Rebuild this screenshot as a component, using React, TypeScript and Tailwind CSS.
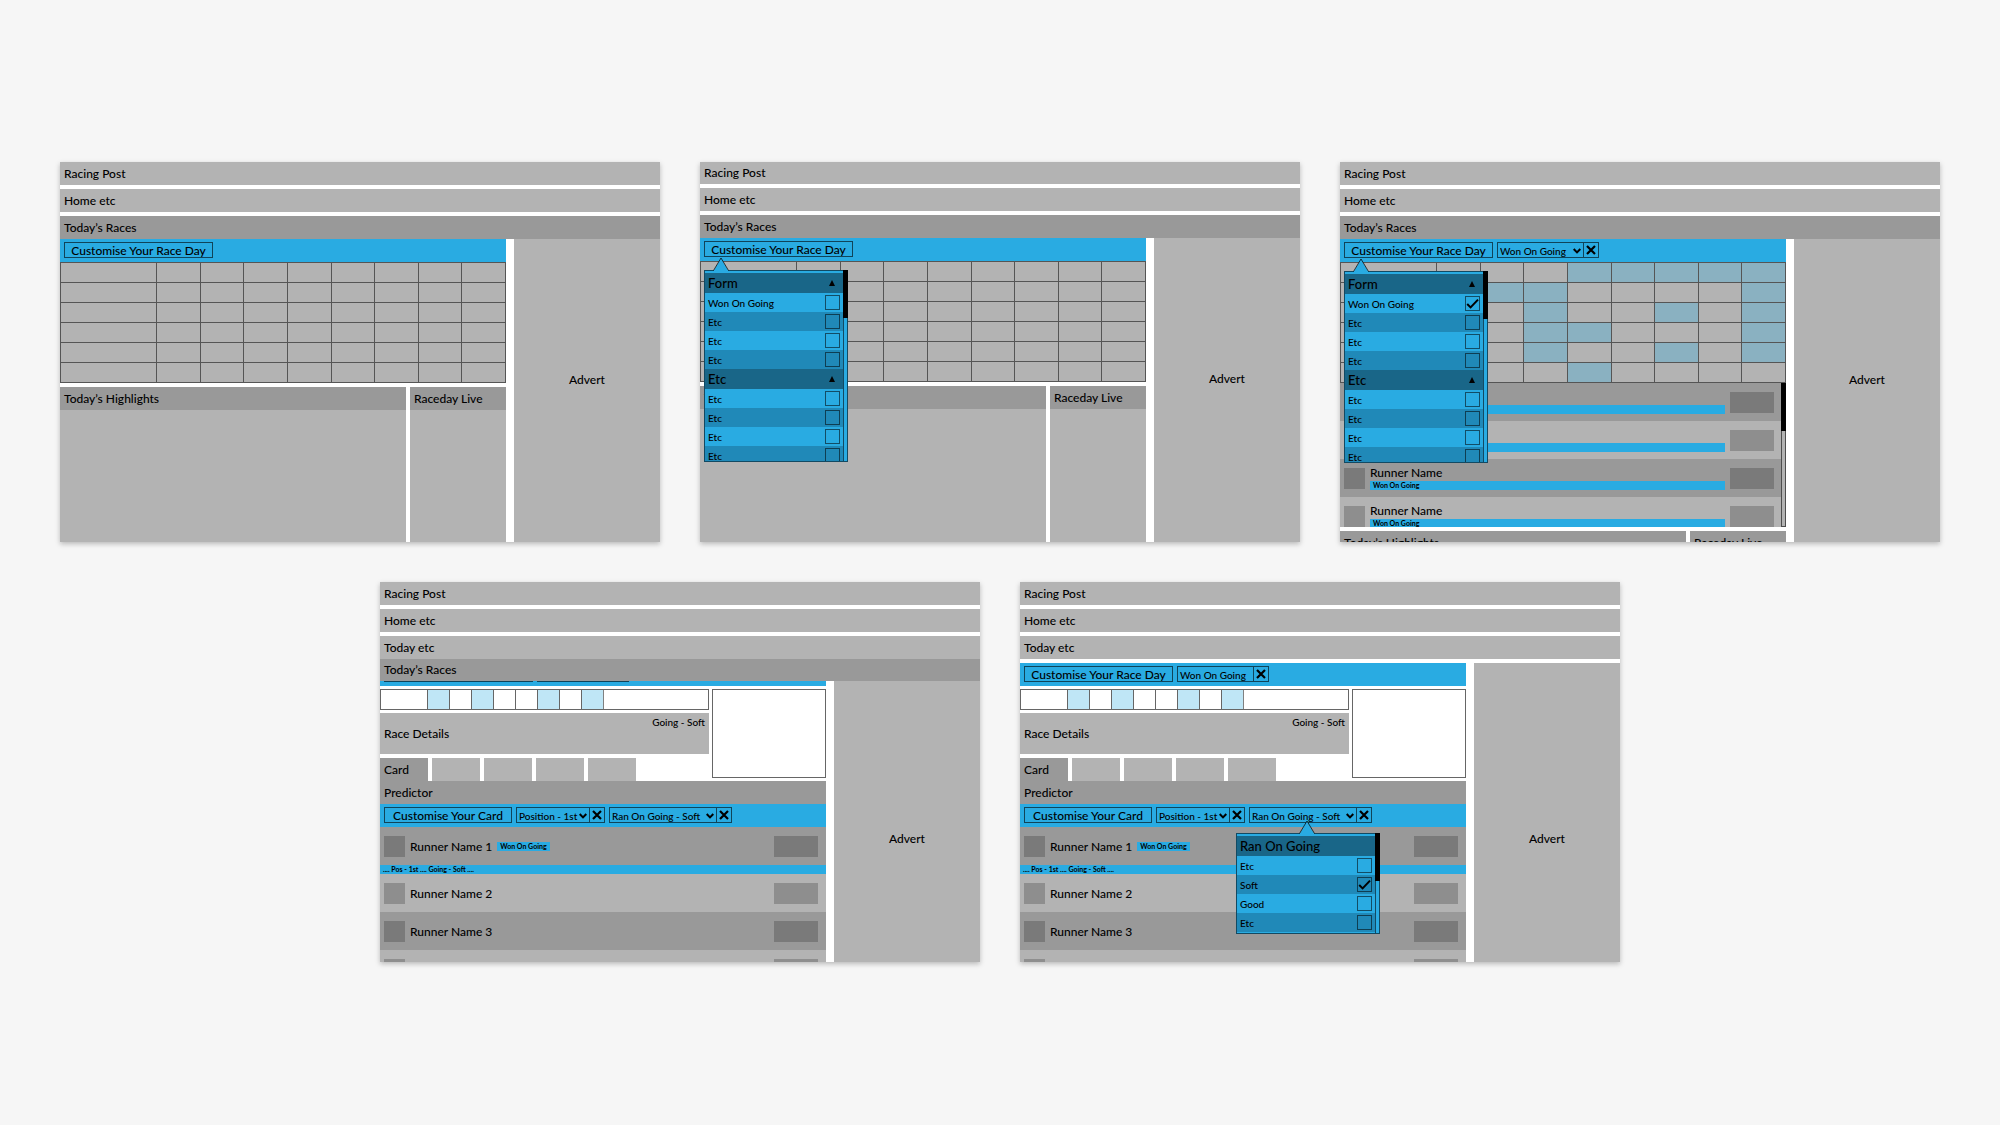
import type { ReactNode } from "react";

type Tone = "light" | "dark";

const MEETING_ROWS = [0, 1, 2, 3, 4, 5];
const RACE_COLS = [0, 1, 2, 3, 4, 5, 6, 7, 8];

// columns to highlight in each meeting row
const WON_ON_GOING: number[][] = [[4, 5, 6, 7, 8], [2, 3, 8], [3, 6, 8], [3, 4, 8], [3, 6, 8], [4]];

function Bar({ children, tone = "light", className = "h-[23px]" }: { children: ReactNode; tone?: Tone; className?: string }) {
  return (
    <div className={`flex shrink-0 items-center px-1 text-xs leading-4 ${tone === "dark" ? "bg-[#999999]" : "bg-[#b3b3b3]"} ${className}`}>
      {children}
    </div>
  );
}

function Frame({ children }: { children: ReactNode }) {
  return (
    <section className="flex h-[380px] w-[30%] flex-col overflow-hidden bg-white shadow-[0_2px_5px_rgba(0,0,0,0.25)]">
      {children}
    </section>
  );
}

function Advert({ className }: { className: string }) {
  return <aside className={`w-[146px] shrink-0 bg-[#b3b3b3] text-center text-xs leading-4 ${className}`}>Advert</aside>;
}

function Toolbar({ children }: { children: ReactNode }) {
  return <div className="relative flex h-[23px] shrink-0 items-start gap-1 bg-[#29abe2] px-1 pt-[3px]">{children}</div>;
}

function ToolButton({ children, className }: { children: ReactNode; className: string }) {
  return (
    <button className={`h-4 border border-black/60 text-center text-xs leading-4 whitespace-nowrap ${className}`}>
      {children}
    </button>
  );
}

function RemoveButton({ label }: { label: string }) {
  return (
    <button aria-label={`Remove ${label}`} className="flex w-[15px] items-center justify-center border-l border-black/60">
      <svg viewBox="0 0 10 10" className="size-[10px]" fill="none" stroke="#000" strokeWidth="2.2">
        <path d="M1 1 9 9M9 1 1 9" />
      </svg>
    </button>
  );
}

function FilterSelect({ value, className }: { value: string; className: string }) {
  return (
    <div className={`flex h-4 border border-black/60 ${className}`}>
      <div className="relative flex-1">
        <select aria-label={value} className="block h-4 w-full appearance-none bg-transparent pl-[2px] text-[10px] leading-4">
          <option>{value}</option>
        </select>
        <svg viewBox="0 0 8 6" className="pointer-events-none absolute top-[5px] right-[2px] h-[6px] w-2" fill="none" stroke="#000" strokeWidth="2">
          <path d="M.7 1 4 4.4 7.3 1" />
        </svg>
      </div>
      <RemoveButton label={value} />
    </div>
  );
}

function FilterTag({ value, className }: { value: string; className: string }) {
  return (
    <div className={`flex h-4 border border-black/60 ${className}`}>
      <span className="flex-1 pl-[2px] text-[10px] leading-4 whitespace-nowrap">{value}</span>
      <RemoveButton label={value} />
    </div>
  );
}

function OptionRow({ label, alt, checked }: { label: string; alt: boolean; checked?: boolean }) {
  return (
    <label className={`flex h-[19px] shrink-0 items-center justify-between pr-[3px] pl-[3px] text-[10px] leading-4 ${alt ? "bg-[#2089b8]" : "bg-[#29abe2]"}`}>
      {label}
      <span className="grid size-[15px]">
        <input type="checkbox" defaultChecked={checked} className="peer col-start-1 row-start-1 size-[15px] appearance-none border border-black/55" />
        <svg viewBox="0 0 15 15" className="pointer-events-none col-start-1 row-start-1 hidden size-[15px] peer-checked:block" fill="none" stroke="#000" strokeWidth="2">
          <path d="M2.2 8 5.6 11.4 13 3.6" />
        </svg>
      </span>
    </label>
  );
}

function OptionGroup({ title, collapsible = true, options, checked }: { title: string; collapsible?: boolean; options: string[]; checked?: string }) {
  return (
    <>
      <div className="flex h-5 shrink-0 items-center justify-between bg-[#196688] pr-2 pl-[3px] text-[13px] leading-4">
        {title}
        {collapsible && (
          <svg viewBox="0 0 6 6" className="size-[6px]"><path d="M3 0 6 6H0Z" /></svg>
        )}
      </div>
      {options.map((o, i) => <OptionRow key={i} label={o} alt={i % 2 === 1} checked={o === checked} />)}
    </>
  );
}

function Dropdown({ children, className, arrow }: { children: ReactNode; className: string; arrow: string }) {
  return (
    <div className={`absolute z-10 w-36 ${className}`}>
      <svg viewBox="0 0 16 14" className={`absolute -top-[13px] z-10 h-[14px] w-4 ${arrow}`}>
        <path d="M.5 14 8 1 15.5 14Z" fill="#29abe2" />
        <path d="M.5 13.5 8 1 15.5 13.5" fill="none" stroke="#000" strokeOpacity=".7" />
      </svg>
      <div className="flex h-full border border-[#124a63] bg-[#29abe2]">
        <div className="flex flex-1 flex-col overflow-hidden pt-[2px]">{children}</div>
        <div className="-mt-px -mr-px w-[5px] border-x border-[#124a63]">
          <div className="-mx-px h-12 bg-black" />
        </div>
      </div>
    </div>
  );
}

function CustomiseDropdown({ checked }: { checked?: string }) {
  return (
    <Dropdown className="top-8 left-1 h-48" arrow="left-[9px]">
      <OptionGroup title="Form" options={["Won On Going", "Etc", "Etc", "Etc"]} checked={checked} />
      <OptionGroup title="Etc" options={["Etc", "Etc", "Etc", "Etc"]} />
    </Dropdown>
  );
}

function RaceGrid({ marks = [] }: { marks?: number[][] }) {
  return (
    <table className="h-[121px] w-full table-fixed border-collapse border border-[#555555] bg-[#b3b3b3]">
      <tbody>
        {MEETING_ROWS.map((r) => (
          <tr key={r}>
            {RACE_COLS.map((c) => (
              <td key={c} className={`border border-[#555555] p-0 ${c === 0 ? "w-24" : ""} ${marks[r]?.includes(c) ? "bg-[#8ab1c1]" : ""}`} />
            ))}
          </tr>
        ))}
      </tbody>
    </table>
  );
}

function Panels() {
  return (
    <div className="mt-1 flex flex-1 gap-1">
      <div className="flex-1 bg-[#b3b3b3]"><Bar tone="dark">Today’s Highlights</Bar></div>
      <div className="w-24 bg-[#b3b3b3]"><Bar tone="dark">Raceday Live</Bar></div>
    </div>
  );
}

function Silk({ tone, className }: { tone: Tone; className: string }) {
  return <div className={`h-[21px] shrink-0 ${tone === "dark" ? "bg-[#7a7a7a]" : "bg-[#8e8e8e]"} ${className}`} />;
}

function RunnerResult({ tone }: { tone: Tone }) {
  return (
    <div className={`flex h-[38px] shrink-0 items-start gap-[5px] pt-[9px] pr-[7px] pl-1 ${tone === "dark" ? "bg-[#999999]" : "bg-[#b3b3b3]"}`}>
      <Silk tone={tone} className="w-[21px]" />
      <div className="min-w-0 flex-1">
        <div className="-mt-[3px] h-4 text-xs leading-4">Runner Name</div>
        <div className="h-[9px] bg-[#29abe2] pl-[3px] text-[7px] leading-[9px] font-bold">Won On Going</div>
      </div>
      <Silk tone={tone} className="w-11" />
    </div>
  );
}

function RunnerRow({ name, tone, tag }: { name: string; tone: Tone; tag?: string }) {
  return (
    <div className={`flex h-[38px] shrink-0 items-center gap-[5px] pt-px pr-2 pl-1 text-xs leading-4 ${tone === "dark" ? "bg-[#999999]" : "bg-[#b3b3b3]"}`}>
      <Silk tone={tone} className="w-[21px]" />
      <span>{name}</span>
      {tag && <span className="h-[9px] bg-[#29abe2] px-[3px] text-[7px] leading-[9px] font-bold">{tag}</span>}
      <Silk tone={tone} className="ml-auto w-11" />
    </div>
  );
}

function RunnerList() {
  return (
    <div className="flex h-36 shrink-0">
      <div className="flex flex-1 flex-col overflow-hidden">
        {MEETING_ROWS.slice(0, 4).map((i) => <RunnerResult key={i} tone={i % 2 ? "light" : "dark"} />)}
      </div>
      <div className="w-[5px] border-x border-b border-[#4d4d4d] bg-[#b3b3b3]">
        <div className="-mx-px h-12 bg-black" />
      </div>
    </div>
  );
}

function RaceStrip() {
  return (
    <div className="flex h-[21px] border border-[#666666]">
      <div className="w-[46px]" />
      {[1, 2, 3, 4, 5, 6, 7, 8].map((n) => (
        <div key={n} className={`w-[22px] border-l border-[#666666] ${[1, 3, 6, 8].includes(n) ? "bg-[#bfe6f6]" : ""}`} />
      ))}
      <div className="w-px bg-[#808080]" />
    </div>
  );
}

function RaceCard({ menu }: { menu?: ReactNode }) {
  return (
    <>
      <div className="flex shrink-0 gap-[3px] pt-[3px]">
        <div className="flex-1">
          <RaceStrip />
          <div className="relative mt-[3px] flex h-[41px] items-center bg-[#b3b3b3] px-1 text-xs leading-4">
            Race Details
            <span className="absolute top-px right-1 text-[10px] leading-4">Going - Soft</span>
          </div>
          <div className="mt-1 flex gap-1">
            <Bar tone="dark" className="h-[23px] w-12">Card</Bar>
            {[1, 2, 3, 4].map((n) => <div key={n} className="h-[23px] w-12 bg-[#b3b3b3]" />)}
          </div>
        </div>
        <div className="h-[89px] w-[114px] border border-[#666666]" />
      </div>
      <Bar tone="dark">Predictor</Bar>
      <Toolbar>
        <ToolButton className="w-32">Customise Your Card</ToolButton>
        <FilterSelect value="Position - 1st" className="w-[89px]" />
        <FilterSelect value="Ran On Going - Soft" className="w-[123px]" />
        {menu}
      </Toolbar>
      <RunnerRow name="Runner Name 1" tone="dark" tag="Won On Going" />
      <div className="h-[9px] shrink-0 bg-[#29abe2] pl-[3px] text-[7px] leading-[9px] font-bold">.... Pos - 1st .... Going - Soft ....</div>
      <RunnerRow name="Runner Name 2" tone="light" />
      <RunnerRow name="Runner Name 3" tone="dark" />
      <RunnerRow name="" tone="light" />
    </>
  );
}

function Header({ first = "h-[23px]" }: { first?: string }) {
  return (
    <header className="flex shrink-0 flex-col gap-1 pb-1">
      <Bar className={first}>Racing Post</Bar>
      <Bar>Home etc</Bar>
    </header>
  );
}

function HomeFrame({ first, filter, menu, children }: { first?: string; filter?: ReactNode; menu?: ReactNode; children: ReactNode }) {
  return (
    <Frame>
      <Header first={first} />
      <Bar tone="dark">Today’s Races</Bar>
      <div className="flex flex-1 gap-2">
        <main className="flex min-w-0 flex-1 flex-col">
          <Toolbar>
            <ToolButton className="w-[149px]">Customise Your Race Day</ToolButton>
            {filter}
            {menu}
          </Toolbar>
          {children}
        </main>
        <Advert className="pt-[133px]" />
      </div>
    </Frame>
  );
}

export default function App() {
  return (
    <div className="flex min-h-screen flex-wrap content-start justify-center gap-x-[2%] gap-y-10 bg-[#f6f6f6] py-[162px] font-['Lato',sans-serif] font-medium text-black">
      <HomeFrame>
        <RaceGrid />
        <Panels />
      </HomeFrame>

      <HomeFrame first="h-[22px]" menu={<CustomiseDropdown />}>
        <RaceGrid />
        <Panels />
      </HomeFrame>

      <HomeFrame filter={<FilterSelect value="Won On Going" className="w-[102px]" />} menu={<CustomiseDropdown checked="Won On Going" />}>
        <RaceGrid marks={WON_ON_GOING} />
        <RunnerList />
        <Panels />
      </HomeFrame>

      <Frame>
        <Header />
        <Bar>Today etc</Bar>
        <Bar tone="dark" className="h-[22px]">Today’s Races</Bar>
        <div className="flex flex-1 gap-2">
          <main className="flex min-w-0 flex-1 flex-col">
            {/* race day toolbar, scrolled under the sticky header */}
            <div className="flex h-[5px] shrink-0 flex-col justify-end overflow-hidden">
              <Toolbar>
                <ToolButton className="w-[149px]">Customise Your Race Day</ToolButton>
                <FilterTag value="Won On Going" className="w-[92px]" />
              </Toolbar>
            </div>
            <RaceCard />
          </main>
          <Advert className="pt-[150px]" />
        </div>
      </Frame>

      <Frame>
        <Header />
        <Bar>Today etc</Bar>
        <div className="mt-1 flex flex-1 gap-2">
          <main className="flex min-w-0 flex-1 flex-col">
            <Toolbar>
              <ToolButton className="w-[149px]">Customise Your Race Day</ToolButton>
              <FilterTag value="Won On Going" className="w-[92px]" />
            </Toolbar>
            <RaceCard
              menu={
                <Dropdown className="top-[29px] left-[216px] h-[101px]" arrow="left-[63px]">
                  <OptionGroup title="Ran On Going" collapsible={false} options={["Etc", "Soft", "Good", "Etc"]} checked="Soft" />
                </Dropdown>
              }
            />
          </main>
          <Advert className="pt-[168px]" />
        </div>
      </Frame>
    </div>
  );
}
